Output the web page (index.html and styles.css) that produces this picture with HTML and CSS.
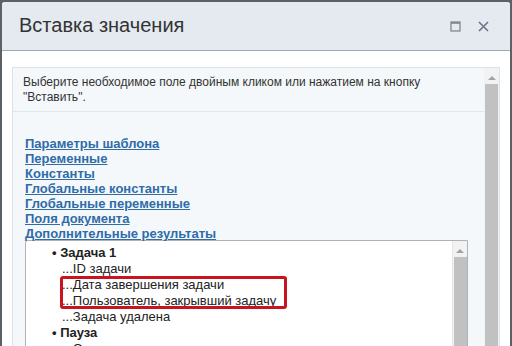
FILE: index.html
```html
<!DOCTYPE html>
<html lang="ru">
<head>
    <meta charset="UTF-8">
    <title>Вставка значения</title>
    <link rel="stylesheet" href="styles.css">
</head>
<body>
    <div class='dialog'>
        <div class='head'>
            <span class='title'>Вставка значения</span>
            <div class='controls'>
                <svg width="11" height="11" viewBox="0 0 11 11"><rect x="1" y="1" width="9" height="9" fill="none" stroke="#7b7f84" stroke-width="1.2"/><line x1="1" y1="2" x2="10" y2="2" stroke="#7b7f84" stroke-width="1.5"/></svg>
                <svg width="11" height="11" viewBox="0 0 11 11"><path d="M1 1L10 10M10 1L1 10" stroke="#6d7585" stroke-width="1.6"/></svg>
            </div>
        </div>
        <div class='body'>
            <div class='panel'>
                <div class='main'>
                    <div class='intro'>Выберите необходимое поле двойным кликом или нажатием на кнопку "Вставить".</div>
                    <div class='links'>
                        <a href="javascript:;">Параметры шаблона</a>
                        <a href="javascript:;">Переменные</a>
                        <a href="javascript:;">Константы</a>
                        <a href="javascript:;">Глобальные константы</a>
                        <a href="javascript:;">Глобальные переменные</a>
                        <a href="javascript:;">Поля документа</a>
                        <a href="javascript:;">Дополнительные результаты</a>
                    </div>
                    <div class='tree'>
                        <div class='tree-list'>
                            <div class='group'>• Задача 1</div>
                            <div class='item'>...ID задачи</div>
                            <div class='item'>...Дата завершения задачи</div>
                            <div class='item'>...Пользователь, закрывший задачу</div>
                            <div class='item'>...Задача удалена</div>
                            <div class='group'>• Пауза</div>
                            <div class='item'>...Оставшееся время</div>
                            <div class='mark'></div>
                        </div>
                        <div class='scroll small'><span class='arrow'></span><span class='thumb'></span></div>
                    </div>
                </div>
                <div class='scroll'><span class='arrow'></span><span class='thumb'></span></div>
            </div>
        </div>
    </div>
</body>
</html>
```
FILE: styles.css
```css
* {
    margin: 0;
    padding: 0;
}
body {
    background: #5c6166;
    font-family: "Liberation Sans", Arial, sans-serif;
    overflow: hidden;
}
.dialog {
    margin: 2px 0 0 2px;
    width: 508px;
    height: 400px;
    background: #fff;
    border-radius: 3px 3px 0 0;
}
.head {
    height: 48px;
    background: #e4eaef;
    border-bottom: 1px solid #a5a9ad;
    border-radius: 3px 3px 0 0;
    display: flex;
    align-items: center;
    padding: 0 21px 0 17px;
}
.title {
    font-size: 20px;
    color: #333;
    flex: 1;
    margin-top: -2px;
}
.controls {
    display: flex;
    gap: 17px;
    margin-top: 1px;
}
.body {
    padding: 16px 10px 0 10px;
}
.panel {
    display: flex;
    height: 320px;
    border: 1px solid #dde2e6;
    background: #f5f8fa;
}
.main {
    flex: 1;
}
.intro {
    font-size: 12px;
    line-height: 15px;
    color: #333;
    padding: 7px 40px 6px 10px;
    border-bottom: 1px solid #e2e6e9;
}
.links {
    padding: 24px 0 0 12px;
}
.links a {
    display: block;
    width: max-content;
    font-size: 13px;
    line-height: 15px;
    font-weight: bold;
    color: #2f6ca8;
}
.tree {
    margin: -1px 16px 0 12px;
    height: 200px;
    background: #fff;
    border: 1px solid #b0b3b6;
    border-radius: 3px 0 0 0;
    display: flex;
}
.tree-list {
    flex: 1;
    padding-top: 4px;
    position: relative;
    font-size: 13px;
    line-height: 16px;
    color: #222;
}
.group {
    font-weight: bold;
    padding-left: 26px;
}
.item {
    padding-left: 36px;
}
.mark {
    position: absolute;
    left: 34px;
    top: 35px;
    width: 221px;
    height: 27px;
    border: 3px solid #c8141f;
    border-radius: 3px;
}
.scroll {
    width: 15px;
    background: #f2f2f2;
    display: flex;
    flex-direction: column;
    align-items: center;
}
.scroll .arrow {
    margin: 8px 0 4px;
    border-left: 4px solid transparent;
    border-right: 4px solid transparent;
    border-bottom: 4px solid #a3a3a3;
}
.scroll .thumb {
    width: 13px;
    flex: 1;
    background: #c1c1c1;
}
.scroll.small {
    width: 14px;
    border-left: 1px solid #e6e6e6;
}
```
